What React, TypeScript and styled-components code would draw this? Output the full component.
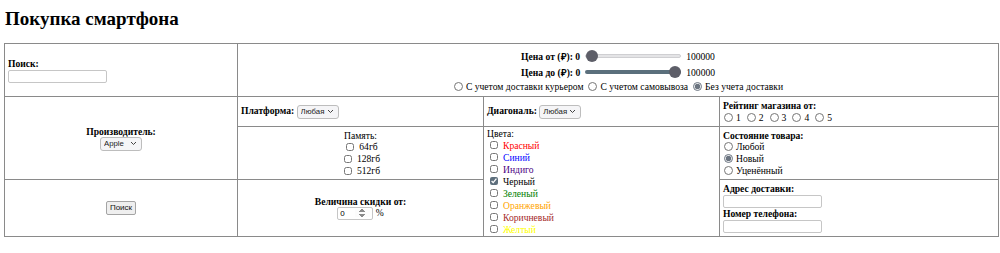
import React from 'react';
import styled, { createGlobalStyle } from 'styled-components';

const chevron =
  "url(\"data:image/svg+xml;utf8,<svg xmlns='http://www.w3.org/2000/svg' width='7' height='5' viewBox='0 0 7 5'><path d='M1 1l2.5 2.5L6 1' fill='none' stroke='%23444' stroke-width='1'/></svg>\")";

const serif = '"Liberation Serif", "Times New Roman", serif';
const sans = '"Liberation Sans", Arial, sans-serif';

const GlobalStyle = createGlobalStyle`
  body {
    margin: 0;
    background: #fff;
    color: #000;
  }
`;

const Page = styled.div`
  padding: 0 3px 0 4px;
  font-family: ${serif};
  font-size: 9.6px;
`;

const Title = styled.h1`
  margin: 8px 0 13px 1px;
  font-family: ${serif};
  font-size: 19px;
  line-height: 22px;
  font-weight: bold;
`;

const FilterTable = styled.table`
  width: 994px;
  border-collapse: collapse;
  table-layout: fixed;
  border: 1px solid #8a8a8a;
  font-family: ${serif};
  font-size: 9.6px;
`;

const Cell = styled.td<{ $center?: boolean; $h?: number }>`
  border: 1px solid #8a8a8a;
  padding: 1px 3px;
  vertical-align: middle;
  text-align: ${(p) => (p.$center ? 'center' : 'left')};
  height: ${(p) => (p.$h ? `${p.$h}px` : 'auto')};
  line-height: 11px;
`;

const Label = styled.b`
  font-weight: bold;
`;

const Block = styled.div``;

const TextField = styled.input`
  box-sizing: border-box;
  display: block;
  width: 99px;
  height: 13px;
  margin: 1px 0 0;
  border: 1px solid #c6c6c6;
  border-radius: 2px;
  font-size: 8px;
`;

const Select = styled.select`
  appearance: none;
  box-sizing: border-box;
  width: 42px;
  height: 14px;
  padding: 0 8px 0 3px;
  border: 1px solid #bdbdbd;
  border-radius: 3px;
  background: #f5f5f7 ${chevron} no-repeat right 4px center;
  font-family: ${sans};
  font-size: 7.8px;
  color: #222;
  vertical-align: middle;
`;

const PriceLine = styled.div`
  display: flex;
  align-items: center;
  justify-content: center;
  gap: 3px;
  height: 16px;
`;

const Range = styled.input<{ $filled?: boolean }>`
  -webkit-appearance: none;
  appearance: none;
  width: 96px;
  height: 12px;
  margin: 0 2px;
  background: transparent;

  &::-webkit-slider-runnable-track {
    height: 4px;
    border-radius: 2px;
    background: ${(p) => (p.$filled ? '#5b6f7c' : '#e4e4e6')};
    border: ${(p) => (p.$filled ? 'none' : '1px solid #cfcfd2')};
  }
  &::-webkit-slider-thumb {
    -webkit-appearance: none;
    width: 12px;
    height: 12px;
    border-radius: 50%;
    background: #5d5e68;
    margin-top: ${(p) => (p.$filled ? '-4px' : '-5px')};
  }
`;

const OptionRow = styled.div<{ $center?: boolean; $gap?: number }>`
  display: flex;
  align-items: center;
  justify-content: ${(p) => (p.$center ? 'center' : 'flex-start')};
  gap: ${(p) => p.$gap || 0}px;
`;

const Option = styled.label<{ $color?: string }>`
  display: inline-flex;
  align-items: center;
  height: 12px;
  color: ${(p) => p.$color || '#000'};
`;

const Check = styled.input`
  width: 8px;
  height: 8px;
  margin: 0 5px 0 3px;
  accent-color: #5e6f7d;
`;

const Radio = styled.input`
  width: 9px;
  height: 9px;
  margin: 0 3px 0 1px;
  accent-color: #6b7480;
`;

const Button = styled.button`
  height: 14px;
  padding: 0 3px;
  border: 1px solid #a4a4a4;
  border-radius: 2px;
  background: #efefef;
  font-family: ${sans};
  font-size: 8px;
  color: #111;
  line-height: 12px;
`;

const NumberField = styled.input`
  box-sizing: border-box;
  width: 36px;
  height: 13px;
  border: 1px solid #c6c6c6;
  border-radius: 2px;
  padding: 0 2px;
  font-family: ${sans};
  font-size: 8px;
  vertical-align: middle;

  &::-webkit-inner-spin-button {
    opacity: 1;
    height: 9px;
  }
`;

const colors = [
  { name: 'Красный', color: '#ff0000' },
  { name: 'Синий', color: '#0000ff' },
  { name: 'Индиго', color: '#4b0082' },
  { name: 'Черный', color: '#000000', checked: true },
  { name: 'Зеленый', color: '#008000' },
  { name: 'Оранжевый', color: '#ffa500' },
  { name: 'Коричневый', color: '#a52a2a' },
  { name: 'Желтый', color: '#ffff00' },
];

export default function App() {
  return (
    <Page>
      <GlobalStyle />
      <Title>Покупка смартфона</Title>
      <FilterTable>
        <colgroup>
          <col style={{ width: 233 }} />
          <col style={{ width: 246 }} />
          <col style={{ width: 236 }} />
          <col style={{ width: 279 }} />
        </colgroup>
        <tbody>
          <tr>
            <Cell $h={50}>
              <Label>Поиск:</Label>
              <TextField type="text" />
            </Cell>
            <Cell colSpan={3} $center>
              <PriceLine>
                <Label>Цена от (₽): 0</Label>
                <Range type="range" min={0} max={100000} defaultValue={0} />
                <span>100000</span>
              </PriceLine>
              <PriceLine>
                <Label>Цена до (₽): 0</Label>
                <Range $filled type="range" min={0} max={100000} defaultValue={100000} />
                <span>100000</span>
              </PriceLine>
              <OptionRow $center $gap={4}>
                <Option><Radio type="radio" name="delivery" />С учетом доставки курьером</Option>
                <Option><Radio type="radio" name="delivery" />С учетом самовывоза</Option>
                <Option><Radio type="radio" name="delivery" defaultChecked />Без учета доставки</Option>
              </OptionRow>
            </Cell>
          </tr>
          <tr>
            <Cell rowSpan={2} $center>
              <Block><Label>Производитель:</Label></Block>
              <Select defaultValue="Apple">
                <option>Apple</option>
                <option>Sony</option>
                <option>LG</option>
              </Select>
            </Cell>
            <Cell $h={27}>
              <Label>Платформа:</Label>{' '}
              <Select defaultValue="Любая">
                <option>Любая</option>
                <option>iOS</option>
              </Select>
            </Cell>
            <Cell>
              <Label>Диагональ:</Label>{' '}
              <Select defaultValue="Любая">
                <option>Любая</option>
                <option>6"</option>
              </Select>
            </Cell>
            <Cell>
              <Block><Label>Рейтинг магазина от:</Label></Block>
              <OptionRow $gap={5}>
                {[1, 2, 3, 4, 5].map((n) => (
                  <Option key={n}><Radio type="radio" name="rating" />{n}</Option>
                ))}
              </OptionRow>
            </Cell>
          </tr>
          <tr>
            <Cell $center $h={50}>
              <Block>Память:</Block>
              {['64гб', '128гб', '512гб'].map((m) => (
                <OptionRow key={m} $center>
                  <Option><Check type="checkbox" />{m}</Option>
                </OptionRow>
              ))}
            </Cell>
            <Cell rowSpan={2}>
              <Block>Цвета:</Block>
              {colors.map((c) => (
                <OptionRow key={c.name}>
                  <Option $color={c.color}>
                    <Check type="checkbox" defaultChecked={c.checked} />
                    {c.name}
                  </Option>
                </OptionRow>
              ))}
            </Cell>
            <Cell>
              <Block><Label>Состояние товара:</Label></Block>
              <OptionRow><Option><Radio type="radio" name="state" />Любой</Option></OptionRow>
              <OptionRow><Option><Radio type="radio" name="state" defaultChecked />Новый</Option></OptionRow>
              <OptionRow><Option><Radio type="radio" name="state" />Уценённый</Option></OptionRow>
            </Cell>
          </tr>
          <tr>
            <Cell $center $h={54}>
              <Button>Поиск</Button>
            </Cell>
            <Cell $center>
              <Block><Label>Величина скидки от:</Label></Block>
              <NumberField type="number" defaultValue={0} min={0} max={100} /> %
            </Cell>
            <Cell>
              <Label>Адрес доставки:</Label>
              <TextField type="text" />
              <Label>Номер телефона:</Label>
              <TextField type="text" />
            </Cell>
          </tr>
        </tbody>
      </FilterTable>
    </Page>
  );
}
